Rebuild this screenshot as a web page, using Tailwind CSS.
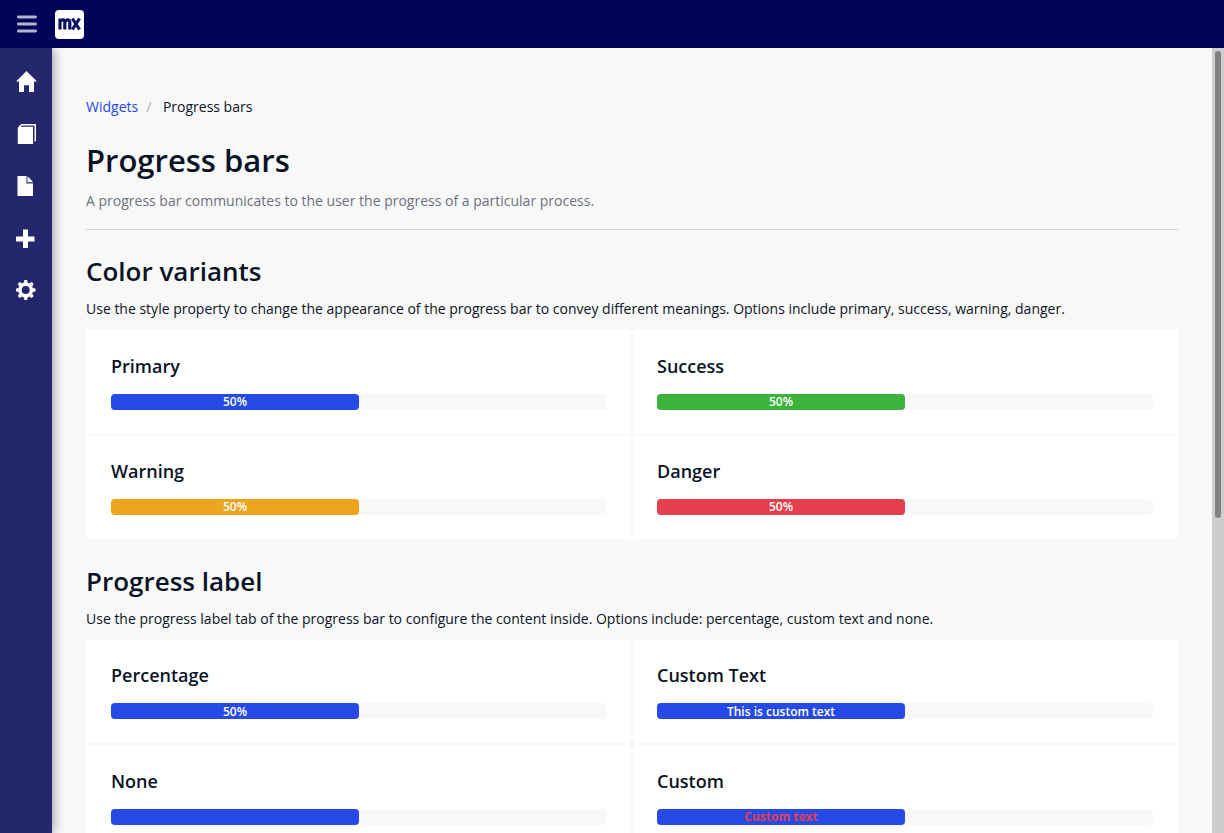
<!DOCTYPE html>
<html lang="en">
<head>
<meta charset="utf-8">
<title>Progress bars</title>
<script src="https://cdn.jsdelivr.net/npm/@tailwindcss/browser@4"></script>
</head>
<body class="flex h-[833px] flex-col overflow-hidden bg-[#f8f8f8] font-['Open_Sans',sans-serif] text-sm text-[#0a1325]">
<header class="z-20 flex h-12 shrink-0 items-center bg-[#020557] pl-[17px]">
  <svg class="h-5 w-5" viewBox="0 0 20 20" fill="none" stroke="#b3b4cd" stroke-width="2.8" stroke-linecap="round"><path d="M1.4 3h17.2M1.4 10h17.2M1.4 17h17.2"/></svg>
  <div class="ml-[18px] flex h-[29px] w-[29px] items-center justify-center rounded bg-white">
    <svg class="h-[29px] w-[29px]" viewBox="0 0 29 29" fill="none" stroke="#0a1362" stroke-width="3.200"><path d="M5 19.500V8.500M5 12.500C5.300 9.400 9.800 8.600 9.800 12V19.500M9.800 12.500C10.200 9.400 14.800 8.600 14.800 12V19.500"/><path d="M17.400 8.500L24.500 19.500M24.500 8.500L17.400 19.500"/></svg>
  </div>
</header>
<div class="flex min-h-0 flex-1">
  <nav class="z-10 flex w-[52px] shrink-0 flex-col items-center bg-[#24276c] pt-[22px] shadow-[2px_0_10px_rgba(0,0,0,0.35)]">
    <a class="flex h-[52px] w-full pl-4"><svg class="h-6 w-6" viewBox="0 0 24 24" fill="#fff"><path d="M10.500 1L21 11.600H18V22H13V15.200H8V22H3V11.600H0z"/></svg></a>
    <a class="flex h-[52px] w-full pl-4"><svg class="h-6 w-6" viewBox="0 0 24 24" fill="#fff"><path d="M1.800 5.500L4.500 4.800H17V22H1.800z"/><path d="M1.800 5.500L5.300 2H20V18.700L18.500 20V3.400H5.800L4 5.500z"/></svg></a>
    <a class="flex h-[52px] w-full pl-4"><svg class="h-6 w-6" viewBox="0 0 24 24" fill="#fff"><path d="M1.500 2H10.500V9.500H17V22H1.500z"/><path d="M11.500 2.300L16.700 7.500V8.200H11.500z"/></svg></a>
    <a class="flex h-[52px] w-full pt-[2px] pl-4"><svg class="h-6 w-6" viewBox="0 0 24 24" fill="#fff"><path d="M7 1.500H12V8.500H18.500V13.500H12V20H7V13.500H0V8.500H7z"/></svg></a>
    <a class="flex h-[52px] w-full pt-[2px] pl-4"><svg class="h-6 w-6" viewBox="0 0 24 24"><g transform="translate(9.700 10)"><circle r="5.700" fill="none" stroke="#fff" stroke-width="3.400"/><g fill="#fff"><path id="tooth" d="M-2.200-7L-1.300-9.900H1.300L2.200-7z"/><use href="#tooth" transform="rotate(45)"/><use href="#tooth" transform="rotate(90)"/><use href="#tooth" transform="rotate(135)"/><use href="#tooth" transform="rotate(180)"/><use href="#tooth" transform="rotate(225)"/><use href="#tooth" transform="rotate(270)"/><use href="#tooth" transform="rotate(315)"/></g></g></svg></a>
  </nav>
  <main class="min-w-0 flex-1 overflow-hidden px-[34px] pt-12">
    <div class="flex h-[22px] items-center"><a class="text-[#264ae5]">Widgets</a><span class="ml-2 text-[#a9acb3]">/</span><span class="ml-[11.6px]">Progress bars</span></div>
    <h1 class="mt-[22px] text-[31px] leading-[40px] font-semibold">Progress bars</h1>
    <p class="mt-[10px] h-[40px] border-b border-[#ced0d3] leading-[22px] text-[#6c7180]">A progress bar communicates to the user the progress of a particular process.</p>
    <section>
      <h2 class="mt-[25.05px] text-[26px] leading-[33.8px] font-semibold">Color variants</h2>
      <p class="mt-[9.5px] mb-[10.05px] leading-[21px]">Use the style property to change the appearance of the progress bar to convey different meanings. Options include primary, success, warning, danger.</p>
      <div class="grid grid-cols-2">
        <div class="h-[105.4px] border border-[#f8f8f8] bg-white p-6"><h4 class="mt-[0.2px] mb-[15.8px] text-lg leading-[23.4px] font-semibold">Primary</h4><div class="h-4 rounded bg-[#f8f8f8]"><div class="h-4 w-1/2 rounded bg-[#264ae5] pt-[0.25px] text-center text-xs leading-4 font-semibold text-white">50%</div></div></div>
        <div class="h-[105.4px] border border-[#f8f8f8] bg-white p-6"><h4 class="mt-[0.2px] mb-[15.8px] text-lg leading-[23.4px] font-semibold">Success</h4><div class="h-4 rounded bg-[#f8f8f8]"><div class="h-4 w-1/2 rounded bg-[#3cb33d] pt-[0.25px] text-center text-xs leading-4 font-semibold text-white">50%</div></div></div>
        <div class="h-[105.4px] border border-[#f8f8f8] bg-white p-6"><h4 class="mt-[0.2px] mb-[15.8px] text-lg leading-[23.4px] font-semibold">Warning</h4><div class="h-4 rounded bg-[#f8f8f8]"><div class="h-4 w-1/2 rounded bg-[#eca51c] pt-[0.25px] text-center text-xs leading-4 font-semibold text-white">50%</div></div></div>
        <div class="h-[105.4px] border border-[#f8f8f8] bg-white p-6"><h4 class="mt-[0.2px] mb-[15.8px] text-lg leading-[23.4px] font-semibold">Danger</h4><div class="h-4 rounded bg-[#f8f8f8]"><div class="h-4 w-1/2 rounded bg-[#e33f4e] pt-[0.25px] text-center text-xs leading-4 font-semibold text-white">50%</div></div></div>
      </div>
    </section>
    <section>
      <h2 class="mt-[24.35px] text-[26px] leading-[33.8px] font-semibold">Progress label</h2>
      <p class="mt-[9.5px] mb-[10.05px] leading-[21px]">Use the progress label tab of the progress bar to configure the content inside. Options include: percentage, custom text and none.</p>
      <div class="grid grid-cols-2">
        <div class="h-[105.4px] border border-[#f8f8f8] bg-white p-6"><h4 class="mt-[0.2px] mb-[15.8px] text-lg leading-[23.4px] font-semibold">Percentage</h4><div class="h-4 rounded bg-[#f8f8f8]"><div class="h-4 w-1/2 rounded bg-[#264ae5] pt-[0.25px] text-center text-xs leading-4 font-semibold text-white">50%</div></div></div>
        <div class="h-[105.4px] border border-[#f8f8f8] bg-white p-6"><h4 class="mt-[0.2px] mb-[15.8px] text-lg leading-[23.4px] font-semibold">Custom Text</h4><div class="h-4 rounded bg-[#f8f8f8]"><div class="h-4 w-1/2 rounded bg-[#264ae5] pt-[0.25px] text-center text-xs leading-4 font-semibold text-white">This is custom text</div></div></div>
        <div class="h-[105.4px] border border-[#f8f8f8] bg-white p-6"><h4 class="mt-[0.5px] mb-[15.5px] text-lg leading-[23.4px] font-semibold">None</h4><div class="h-4 rounded bg-[#f8f8f8]"><div class="h-4 w-1/2 rounded bg-[#264ae5]"></div></div></div>
        <div class="h-[105.4px] border border-[#f8f8f8] bg-white p-6"><h4 class="mt-[0.5px] mb-[15.5px] text-lg leading-[23.4px] font-semibold">Custom</h4><div class="h-4 rounded bg-[#f8f8f8]"><div class="h-4 w-1/2 rounded bg-[#264ae5] pt-[0.25px] text-center text-xs leading-4 font-bold text-[#e33f4e]">Custom text</div></div></div>
      </div>
    </section>
  </main>
  <div class="w-3 shrink-0 bg-[#cdcdcd] pt-[3px] pl-[3px]"><div class="h-[467px] w-1.5 rounded-full bg-[#7e8282]"></div></div>
</div>
</body>
</html>
